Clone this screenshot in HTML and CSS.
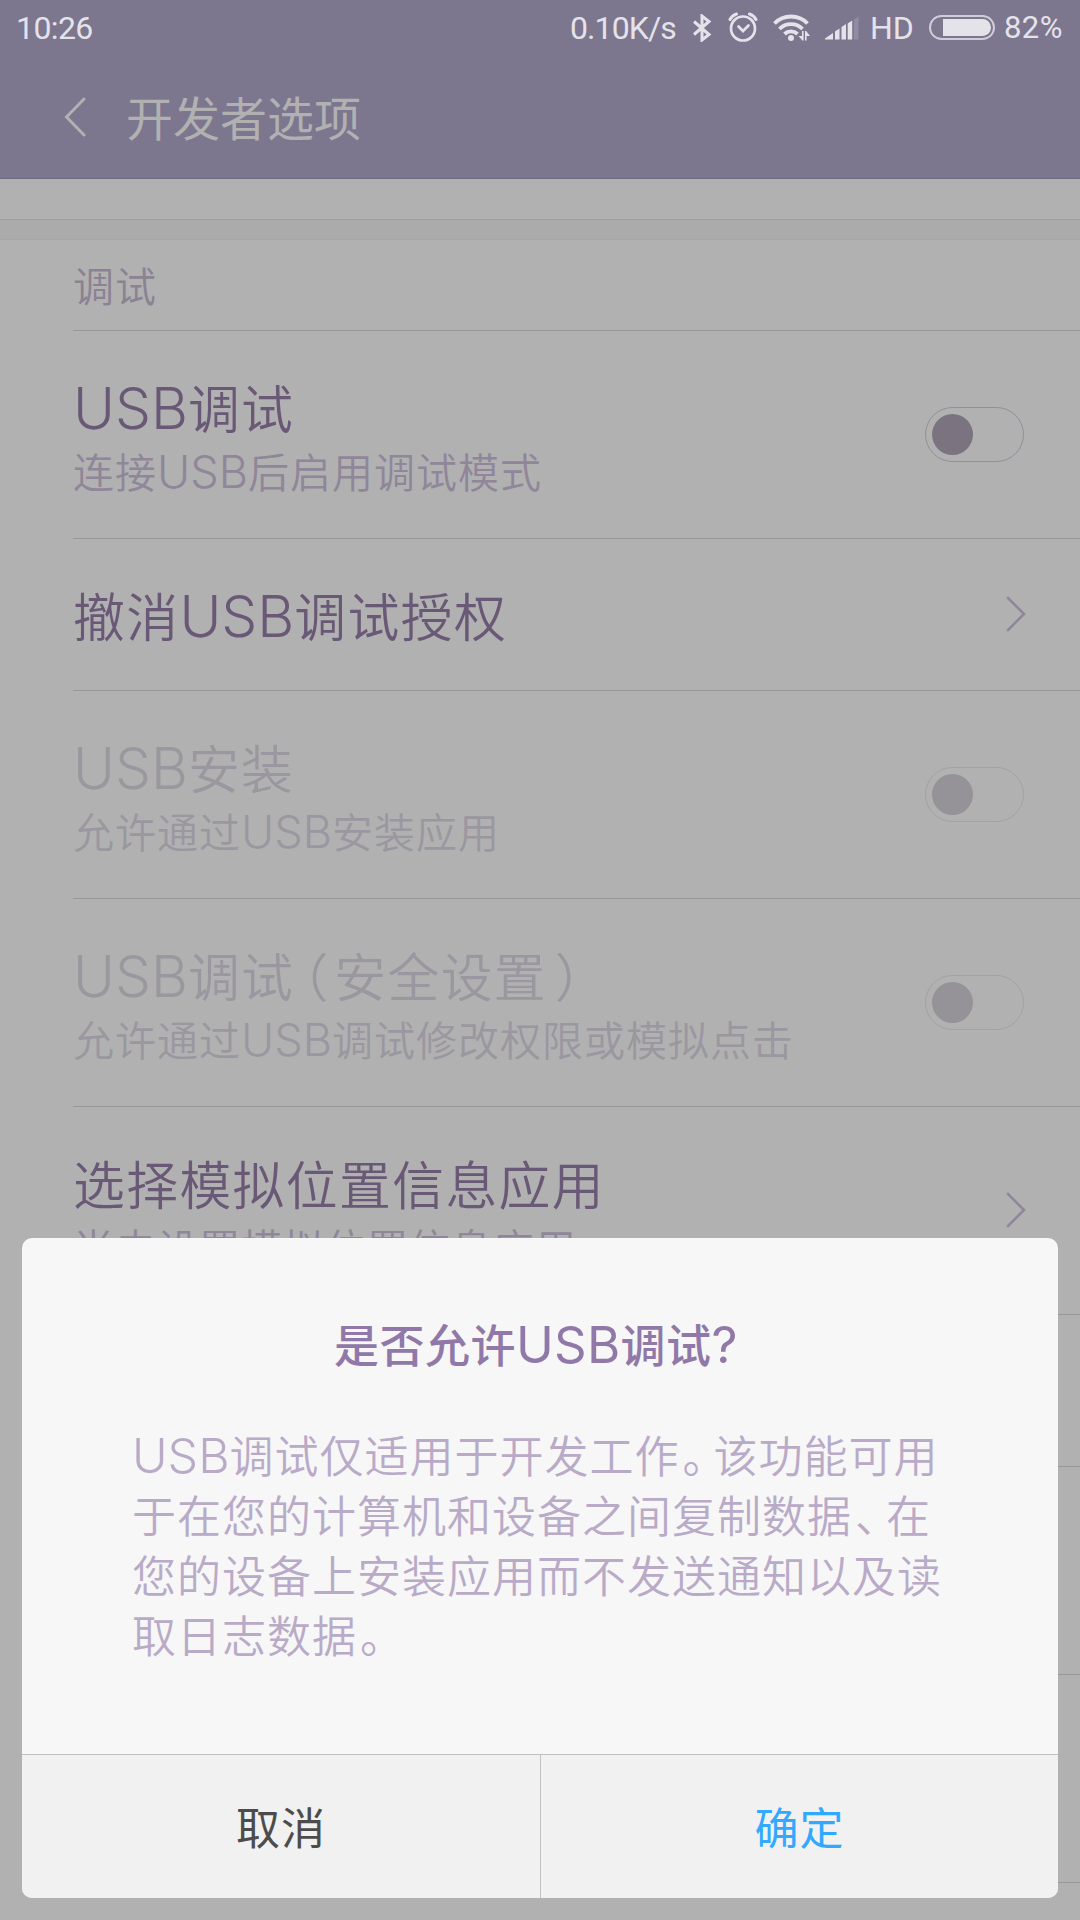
FILE: index.html
```html
<!DOCTYPE html>
<html lang="zh-CN">
<head>
<meta charset="utf-8">
<title>开发者选项</title>
<link rel="stylesheet" href="styles.css">
</head>
<body>
<div class="screen">
  <header class="appbar">
    <div class="status">
      <span class="clock">10:26</span>
      <span class="speed">0.10K/s</span>
      <svg class="icon-bt" width="20" height="28" viewBox="0 0 20 28"><path d="M2 7.500 17 20.500 10 26V2l7 5.500L2 20.500" fill="none" stroke="#e5e3ea" stroke-width="3" stroke-linejoin="miter"/></svg>
      <svg class="icon-alarm" width="30" height="30" viewBox="0 0 30 30"><g fill="none" stroke="#e5e3ea" stroke-linecap="round"><circle cx="15" cy="16.500" r="12" stroke-width="2.700"/><path d="M10.500 14.500l4.500 4.500 5.500-5.500" stroke-width="2.700"/><path d="M2 7.500Q4 3.500 8.500 2M28 7.500Q26 3.500 21.500 2" stroke-width="3"/></g></svg>
      <svg class="icon-wifi" width="37" height="28" viewBox="0 0 37 28"><g fill="none" stroke="#e5e3ea" stroke-width="3.800"><path d="M1.500 9.500a23 23 0 0 1 33 0"/><path d="M6.500 15a16 16 0 0 1 23 0"/><path d="M11.500 20a9.500 9.500 0 0 1 13 0"/></g><circle cx="18" cy="24" r="3" fill="#e5e3ea"/><path d="M29 17h1.600v9.500h-1.200L25.500 22H29zM32 26.500h1.600V22H37l-3.800-5H32z" fill="#e5e3ea"/></svg>
      <svg class="icon-signal" width="34" height="24" viewBox="0 0 34 24"><path d="M0 23.500v-1l8-5.500v6.500zM10 23.500v-8l4.500-3v11zM16.500 23.500V11l4.500-3v15.500zM22.700 23.500V7.500l4.500-3v19z" fill="#e5e3ea"/><path d="M29 23.500V3.500l4.500-3v23z" fill="#928ca2"/></svg>
      <span class="hd">HD</span>
      <span class="battery"><span class="battery-level"></span></span>
      <span class="percent">82%</span>
    </div>
    <div class="titlebar">
      <svg class="back" width="22" height="40" viewBox="0 0 22 40"><path d="M20 2 2.500 20 20 38" fill="none" stroke="#b1b1b1" stroke-width="3" stroke-linecap="round"/></svg>
      <h1>开发者选项</h1>
    </div>
  </header>
  <main class="settings">
    <div class="gap"></div>
    <h2 class="section">调试</h2>
    <div class="row">
      <div class="copy"><div class="name"><span class="latin">USB</span>调试</div><div class="desc">连接<span class="latin">USB</span>后启用调试模式</div></div>
      <span class="switch"><span class="knob"></span></span>
    </div>
    <div class="row single">
      <div class="copy"><div class="name">撤消<span class="latin">USB</span>调试授权</div></div>
      <svg class="next" width="20" height="36" viewBox="0 0 20 36"><path d="M2 2l16 16L2 34"/></svg>
    </div>
    <div class="row disabled">
      <div class="copy"><div class="name"><span class="latin">USB</span>安装</div><div class="desc">允许通过<span class="latin">USB</span>安装应用</div></div>
      <span class="switch"><span class="knob"></span></span>
    </div>
    <div class="row disabled">
      <div class="copy"><div class="name"><span class="latin">USB</span>调试<span class="paren">（</span>安全设置<span class="paren">）</span></div><div class="desc">允许通过<span class="latin">USB</span>调试修改权限或模拟点击</div></div>
      <span class="switch"><span class="knob"></span></span>
    </div>
    <div class="row">
      <div class="copy"><div class="name">选择模拟位置信息应用</div><div class="desc">尚未设置模拟位置信息应用</div></div>
      <svg class="next" width="20" height="36" viewBox="0 0 20 36"><path d="M2 2l16 16L2 34"/></svg>
    </div>
    <div class="row single"></div>
    <div class="row"></div>
    <div class="row"></div>
  </main>
  <section class="dialog" role="dialog">
    <div class="dialog-body">
      <h3>是否允许<span class="latin">USB</span>调试<span class="question">?</span></h3>
      <p><span class="latin">USB</span>调试仅适用于开发工作<span class="stop">。</span>该功能可用<br>于在您的计算机和设备之间复制数据<span class="stop">、</span>在<br>您的设备上安装应用而不发送通知以及读<br>取日志数据<span class="stop">。</span></p>
    </div>
    <div class="actions">
      <button class="cancel">取消</button>
      <button class="ok">确定</button>
    </div>
  </section>
</div>
</body>
</html>
```
FILE: styles.css
```css
* { box-sizing: border-box; }
body { margin: 0; font-family: "Noto Sans CJK SC", sans-serif; }
h1, h2, h3, p { margin: 0; font-weight: 400; }
svg { display: block; flex: none; }
.screen { position: relative; width: 1080px; height: 1920px; overflow: hidden; background: #b1b1b1; }

.appbar { height: 179px; background: #7c768e; border-bottom: 1px solid #706984; }
.status { display: flex; align-items: flex-start; height: 60px; color: #e5e3ea; font: 32px/38px Roboto, sans-serif; padding-top: 9px; white-space: nowrap; }
.clock { width: 554px; padding-left: 16px; letter-spacing: -0.6px; }
.speed { width: 138px; padding-left: 16px; letter-spacing: -0.9px; }
.icon-bt { margin-top: 5px; }
.icon-alarm { margin: 3px 0 0 16px; }
.icon-wifi { margin: 5px 0 0 15px; }
.icon-signal { margin: 7px 0 0 15px; }
.hd { margin-left: 11px; width: 48px; }
.battery { margin: 6px 0 0 11px; width: 66px; height: 25px; border: 2px solid #d0cdd9; border-radius: 13px; padding: 2px 2px 2px 12px; display: flex; }
.battery-level { flex: 1; background: #e5e3ea; border-radius: 0 9px 9px 0; }
.percent { margin-left: 9px; font-size: 31px; letter-spacing: 0.4px; }
.titlebar { display: flex; align-items: center; height: 118px; padding-left: 64px; }
.back { margin-top: -4px; }
h1 { margin: -6px 0 0 40px; font-size: 47px; line-height: 60px; color: #b1b1b1; }

.settings { padding-left: 73px; }
.gap { height: 61px; margin-left: -73px; background: linear-gradient(#9e9e9e, #9e9e9e) 0 40px / 100% 1px no-repeat, linear-gradient(#ababab, #ababab) 0 41px / 100% 19px no-repeat; border-bottom: 1px solid #a6a6a6; }
.section { height: 91px; border-bottom: 1px solid #989898; line-height: 89px; font-size: 41px; letter-spacing: 1px; font-weight: 350; color: #8b8294; }
.row { height: 208px; border-bottom: 1px solid #989898; display: flex; align-items: center; justify-content: space-between; padding: 0 56px 0 0; color: #695876; font-weight: 350; white-space: nowrap; }
.copy { padding-top: 6px; }
.single { height: 152px; }
.single .copy { padding: 0; }
.name { font-size: 51.8px; line-height: 64px; letter-spacing: 1.4px; }
.desc { font-size: 41px; line-height: 62px; letter-spacing: 1px; color: #908699; }
.disabled, .disabled .desc { color: #9b97a0; }
.latin { font-family: Inter, sans-serif; font-size: 1.1em; line-height: 1; letter-spacing: 0; font-weight: 300; }
.paren { font-feature-settings: "halt"; letter-spacing: 6px; margin-left: 8px; }
.switch { width: 99px; height: 55px; border: 1px solid #928e9b; border-radius: 28px; padding: 6px; flex: none; }
.knob { display: block; width: 41px; height: 41px; border-radius: 50%; background: #7b7480; }
.disabled .switch { border-color: #a2a1a3; }
.disabled .knob { background: #959298; }
.next { margin: -1px -2px 0 0; fill: none; stroke: #90869a; stroke-width: 2.6; stroke-linecap: round; }

.dialog { position: absolute; left: 22px; top: 1238px; width: 1036px; height: 660px; border-radius: 10px; background: #f7f7f7; overflow: hidden; display: flex; flex-direction: column; }
.dialog-body { height: 516px; }
h3 { padding: 73px 8px 0 0; text-align: center; font-size: 45px; line-height: 66px; letter-spacing: 0.5px; font-weight: 500; color: #9079a8; white-space: nowrap; }
h3 .latin { font-weight: 400; font-size: 1.13em; letter-spacing: 0.3px; }
.question { font-family: Inter, sans-serif; font-size: 1.13em; line-height: 1; font-weight: 400; }
p { margin: 47px 0 0 110px; font-size: 44px; line-height: 60px; letter-spacing: 1px; font-weight: 350; color: #b9abc7; white-space: nowrap; }
.stop { margin-left: 3px; letter-spacing: -13px; }
.actions { height: 144px; border-top: 1px solid #c0c0c0; display: grid; grid-template-columns: 519px 517px; background: #f1f1f1; }
button { border: 0; margin: 0; padding: 0 0 2px; background: none; font: 400 44px/60px "Noto Sans CJK SC", sans-serif; letter-spacing: 1px; }
.cancel { color: #4c4c4c; border-right: 1px solid #c0c0c0; }
.ok { color: #33a8ff; }
```
